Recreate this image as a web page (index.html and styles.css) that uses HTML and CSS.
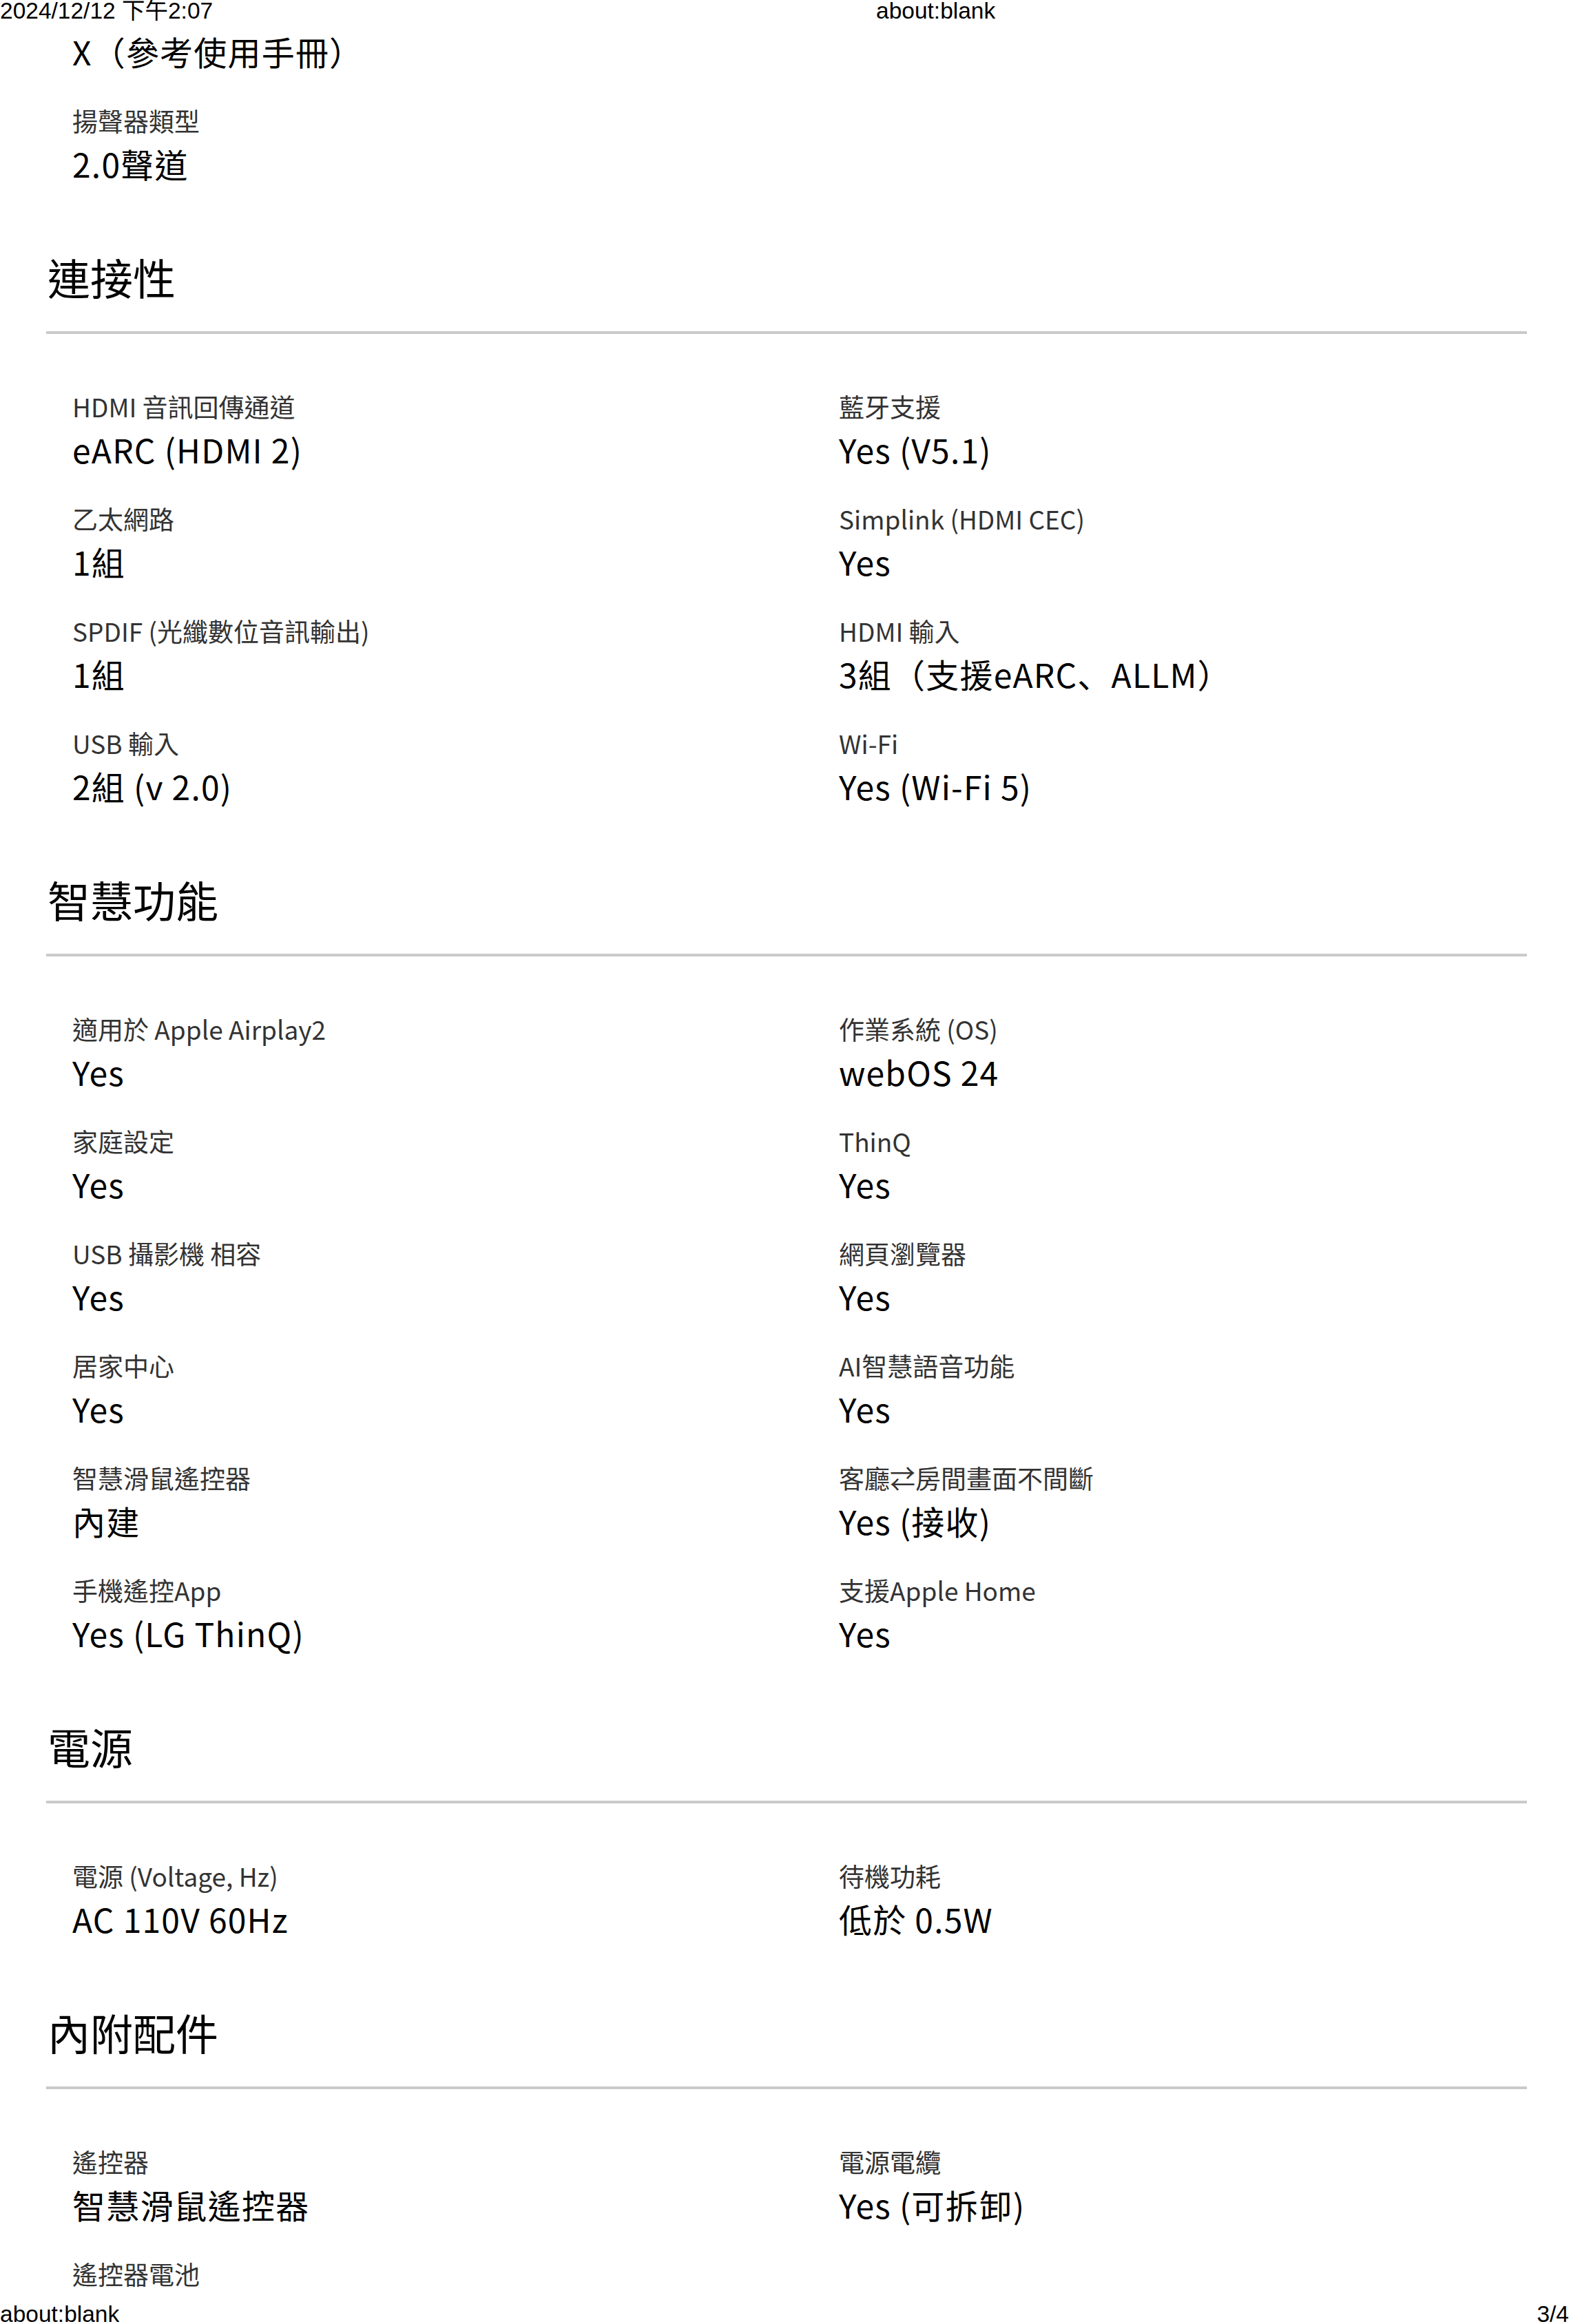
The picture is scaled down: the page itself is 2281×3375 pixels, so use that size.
FILE: index.html
```html
<!DOCTYPE html>
<html lang="zh-Hant">
<head>
<meta charset="utf-8">
<title>about:blank</title>
<link rel="stylesheet" href="styles.css">
</head>
<body>
<header class="print-header">
  <span class="print-date">2024/12/12 下午2:07</span>
  <span class="print-title">about:blank</span>
</header>

<main class="sheet">
  <div class="specs specs-cont">
    <div class="spec"><div class="spec-value">X（參考使用手冊）</div></div>
    <div class="spec"><div class="spec-label">揚聲器類型</div><div class="spec-value">2.0聲道</div></div>
  </div>

  <section class="spec-section">
    <h2 class="section-title">連接性</h2>
    <div class="rule"></div>
    <div class="specs">
      <div class="spec"><div class="spec-label">HDMI 音訊回傳通道</div><div class="spec-value">eARC (HDMI 2)</div></div>
      <div class="spec"><div class="spec-label">藍牙支援</div><div class="spec-value">Yes (V5.1)</div></div>
      <div class="spec"><div class="spec-label">乙太網路</div><div class="spec-value">1組</div></div>
      <div class="spec"><div class="spec-label">Simplink (HDMI CEC)</div><div class="spec-value">Yes</div></div>
      <div class="spec"><div class="spec-label">SPDIF (光纖數位音訊輸出)</div><div class="spec-value">1組</div></div>
      <div class="spec"><div class="spec-label">HDMI 輸入</div><div class="spec-value">3組（支援eARC<span class="punct-jp">、</span>ALLM）</div></div>
      <div class="spec"><div class="spec-label">USB 輸入</div><div class="spec-value">2組 (v 2.0)</div></div>
      <div class="spec"><div class="spec-label">Wi-Fi</div><div class="spec-value">Yes (Wi-Fi 5)</div></div>
    </div>
  </section>

  <section class="spec-section">
    <h2 class="section-title">智慧功能</h2>
    <div class="rule"></div>
    <div class="specs">
      <div class="spec"><div class="spec-label">適用於 Apple Airplay2</div><div class="spec-value">Yes</div></div>
      <div class="spec"><div class="spec-label">作業系統 (OS)</div><div class="spec-value">webOS 24</div></div>
      <div class="spec"><div class="spec-label">家庭設定</div><div class="spec-value">Yes</div></div>
      <div class="spec"><div class="spec-label">ThinQ</div><div class="spec-value">Yes</div></div>
      <div class="spec"><div class="spec-label">USB 攝影機 相容</div><div class="spec-value">Yes</div></div>
      <div class="spec"><div class="spec-label">網頁瀏覽器</div><div class="spec-value">Yes</div></div>
      <div class="spec"><div class="spec-label">居家中心</div><div class="spec-value">Yes</div></div>
      <div class="spec"><div class="spec-label">AI智慧語音功能</div><div class="spec-value">Yes</div></div>
      <div class="spec"><div class="spec-label">智慧滑鼠遙控器</div><div class="spec-value">內建</div></div>
      <div class="spec"><div class="spec-label">客廳⇄房間畫面不間斷</div><div class="spec-value">Yes (接收)</div></div>
      <div class="spec"><div class="spec-label">手機遙控App</div><div class="spec-value">Yes (LG ThinQ)</div></div>
      <div class="spec"><div class="spec-label">支援Apple Home</div><div class="spec-value">Yes</div></div>
    </div>
  </section>

  <section class="spec-section">
    <h2 class="section-title">電源</h2>
    <div class="rule"></div>
    <div class="specs">
      <div class="spec"><div class="spec-label">電源 (Voltage, Hz)</div><div class="spec-value">AC 110V 60Hz</div></div>
      <div class="spec"><div class="spec-label">待機功耗</div><div class="spec-value">低於 0.5W</div></div>
    </div>
  </section>

  <section class="spec-section">
    <h2 class="section-title">內附配件</h2>
    <div class="rule"></div>
    <div class="specs">
      <div class="spec"><div class="spec-label">遙控器</div><div class="spec-value">智慧滑鼠遙控器</div></div>
      <div class="spec"><div class="spec-label">電源電纜</div><div class="spec-value">Yes (可拆卸)</div></div>
      <div class="spec"><div class="spec-label">遙控器電池</div></div>
    </div>
  </section>
</main>

<footer class="print-footer">
  <span class="print-url">about:blank</span>
  <span class="print-page">3/4</span>
</footer>
</body>
</html>
```

FILE: styles.css
```css
html, body {
  margin: 0;
  padding: 0;
  background: #ffffff;
}

body {
  width: 2281px;
  height: 3375px;
  overflow: hidden;
  display: flex;
  flex-direction: column;
  font-family: "Noto Sans CJK TC", "Noto Sans", sans-serif;
  color: #000000;
}

.print-header,
.print-footer {
  flex: none;
  display: flex;
  font-family: "Liberation Sans", "Noto Sans CJK TC", sans-serif;
  font-size: 33.5px;
  color: #000000;
  white-space: nowrap;
}

.print-header {
  height: 32px;
  line-height: 31px;
}

.print-date {
  width: 1272px;
}

.print-footer {
  box-sizing: border-box;
  height: 35px;
  line-height: 29px;
  padding: 6px 3px 0 0;
  justify-content: space-between;
}

.sheet {
  flex: 1;
  min-height: 0;
  overflow: hidden;
  width: 2150px;
  padding: 5px 0 0 67px;
}

.section-title {
  margin: 0 0 39px 2px;
  font-size: 62px;
  line-height: 80px;
  font-weight: 400;
}

.rule {
  height: 4px;
  background: #cacaca;
}

.specs {
  display: grid;
  grid-template-columns: 1113px 1fr;
  row-gap: 38px;
  padding: 80px 0 0 38px;
  margin-bottom: 87px;
}

.specs-cont {
  padding-top: 0;
}

.specs-cont .spec {
  grid-column: 1;
}

.spec-label {
  font-size: 37px;
  line-height: 50px;
  color: #333333;
  white-space: nowrap;
}

.spec-value {
  font-size: 48px;
  line-height: 75px;
  letter-spacing: 1.2px;
  color: #000000;
  white-space: nowrap;
}

.punct-jp {
  font-family: "Noto Sans CJK JP", "Noto Sans CJK TC", sans-serif;
}
```
